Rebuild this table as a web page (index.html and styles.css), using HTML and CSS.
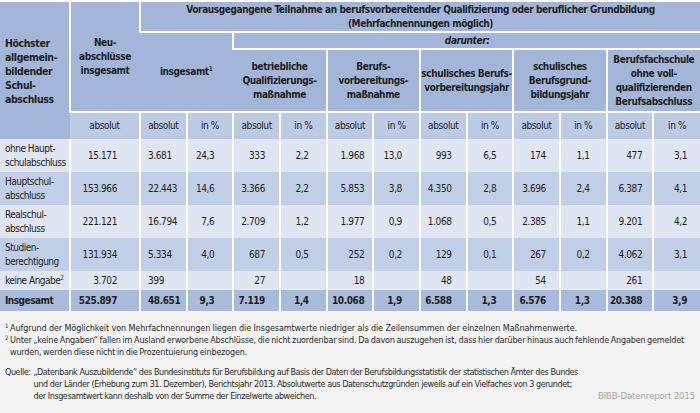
FILE: index.html
```html
<!DOCTYPE html>
<html lang="de">
<head>
<meta charset="utf-8">
<link rel="stylesheet" href="styles.css">
</head>
<body>
<table class="tbl">
  <colgroup>
    <col class="w1"><col class="w1">
    <col class="w2"><col class="w2"><col class="w2"><col class="w2"><col class="w2"><col class="w2">
    <col class="w2"><col class="w2"><col class="w2"><col class="w2"><col class="w2"><col class="w2">
  </colgroup>
  <thead>
    <tr class="h1">
      <th rowspan="4" class="rowhead">Höchster<br>allgemein-<br>bildender<br>Schul-<br>abschluss</th>
      <th rowspan="3">Neu-<br>abschlüsse<br>insgesamt</th>
      <th colspan="12">Vorausgegangene Teilnahme an berufsvorbereitender Qualifizierung oder beruflicher Grundbildung<br>(Mehrfachnennungen möglich)</th>
    </tr>
    <tr class="h2">
      <th rowspan="2" colspan="2">insgesamt<sup>1</sup></th>
      <th colspan="10" class="dar">darunter:</th>
    </tr>
    <tr class="h3">
      <th colspan="2">betriebliche<br>Qualifizierungs-<br>maßnahme</th>
      <th colspan="2">Berufs-<br>vorbereitungs-<br>maßnahme</th>
      <th colspan="2">schulisches Berufs-<br>vorbereitungsjahr</th>
      <th colspan="2">schulisches<br>Berufsgrund-<br>bildungsjahr</th>
      <th colspan="2">Berufsfachschule<br>ohne voll-<br>qualifizierenden<br>Berufsabschluss</th>
    </tr>
    <tr class="h4">
      <th>absolut</th>
      <th>absolut</th><th>in %</th>
      <th>absolut</th><th>in %</th>
      <th>absolut</th><th>in %</th>
      <th>absolut</th><th>in %</th>
      <th>absolut</th><th>in %</th>
      <th>absolut</th><th>in %</th>
    </tr>
  </thead>
  <tbody>
    <tr class="light tall">
      <td class="lab">ohne Haupt-<br>schulabschluss</td>
      <td class="c2">15.171</td><td class="c3">3.681</td><td class="c4">24,3</td>
      <td class="c5">333</td><td class="c6">2,2</td><td class="c7">1.968</td><td class="c8">13,0</td>
      <td class="c9">993</td><td class="c10">6,5</td><td class="c11">174</td><td class="c12">1,1</td>
      <td class="c13">477</td><td class="c14">3,1</td>
    </tr>
    <tr class="dark tall">
      <td class="lab">Hauptschul-<br>abschluss</td>
      <td class="c2">153.966</td><td class="c3">22.443</td><td class="c4">14,6</td>
      <td class="c5">3.366</td><td class="c6">2,2</td><td class="c7">5.853</td><td class="c8">3,8</td>
      <td class="c9">4.350</td><td class="c10">2,8</td><td class="c11">3.696</td><td class="c12">2,4</td>
      <td class="c13">6.387</td><td class="c14">4,1</td>
    </tr>
    <tr class="light tall">
      <td class="lab">Realschul-<br>abschluss</td>
      <td class="c2">221.121</td><td class="c3">16.794</td><td class="c4">7,6</td>
      <td class="c5">2.709</td><td class="c6">1,2</td><td class="c7">1.977</td><td class="c8">0,9</td>
      <td class="c9">1.068</td><td class="c10">0,5</td><td class="c11">2.385</td><td class="c12">1,1</td>
      <td class="c13">9.201</td><td class="c14">4,2</td>
    </tr>
    <tr class="dark tall">
      <td class="lab">Studien-<br>berechtigung</td>
      <td class="c2">131.934</td><td class="c3">5.334</td><td class="c4">4,0</td>
      <td class="c5">687</td><td class="c6">0,5</td><td class="c7">252</td><td class="c8">0,2</td>
      <td class="c9">129</td><td class="c10">0,1</td><td class="c11">267</td><td class="c12">0,2</td>
      <td class="c13">4.062</td><td class="c14">3,1</td>
    </tr>
    <tr class="light short">
      <td class="lab">keine Angabe<sup>2</sup></td>
      <td class="c2">3.702</td><td class="c3">399</td><td class="c4"></td>
      <td class="c5">27</td><td class="c6"></td><td class="c7">18</td><td class="c8"></td>
      <td class="c9">48</td><td class="c10"></td><td class="c11">54</td><td class="c12"></td>
      <td class="c13">261</td><td class="c14"></td>
    </tr>
    <tr class="total">
      <td class="lab">Insgesamt</td>
      <td class="c2">525.897</td><td class="c3">48.651</td><td class="c4">9,3</td>
      <td class="c5">7.119</td><td class="c6">1,4</td><td class="c7">10.068</td><td class="c8">1,9</td>
      <td class="c9">6.588</td><td class="c10">1,3</td><td class="c11">6.576</td><td class="c12">1,3</td>
      <td class="c13">20.388</td><td class="c14">3,9</td>
    </tr>
  </tbody>
</table>
<div class="notes">
  <p class="fn"><span class="mk"><sup>1</sup></span><span>Aufgrund der Möglichkeit von Mehrfachnennungen liegen die Insgesamtwerte niedriger als die Zeilensummen der einzelnen Maßnahmenwerte.</span></p>
  <p class="fn fn2"><span class="mk"><sup>2</sup></span><span>Unter „keine Angaben“ fallen im Ausland erworbene Abschlüsse, die nicht zuordenbar sind. Da davon auszugehen ist, dass hier darüber hinaus auch fehlende Angaben gemeldet<br>wurden, werden diese nicht in die Prozentuierung einbezogen.</span></p>
  <div class="source">
    <p class="src"><span class="lbl">Quelle:</span><span>„Datenbank Auszubildende“ des Bundesinstituts für Berufsbildung auf Basis der Daten der Berufsbildungsstatistik der statistischen Ämter des Bundes<br>und der Länder (Erhebung zum 31. Dezember), Berichtsjahr 2013. Absolutwerte aus Datenschutzgründen jeweils auf ein Vielfaches von 3 gerundet;<br>der Insgesamtwert kann deshalb von der Summe der Einzelwerte abweichen.</span></p>
    <span class="brand">BIBB-Datenreport 2015</span>
  </div>
</div>
</body>
</html>
```

FILE: styles.css
```css
html, body {
  margin: 0;
  padding: 0;
  background: #f3f3f3;
}
body {
  width: 700px;
  height: 413px;
  overflow: hidden;
  font-family: "DejaVu Sans Condensed", "DejaVu Sans", sans-serif;
  color: #1e1e1e;
}
.tbl {
  width: 700px;
  table-layout: fixed;
  border-collapse: collapse;
  border-top: 2px solid #fff;
  font-size: 10px;
  letter-spacing: -0.4px;
}
.w1 { width: 70px; }
.w2 { width: 46.666px; }
.tbl th, .tbl td {
  padding: 0;
  border-left: 2px solid #fff;
  white-space: nowrap;
}
.tbl th:first-child, .tbl td:first-child { border-left: 0; }
.tbl th {
  background: #a3b6d9;
  font-weight: bold;
  text-align: center;
  line-height: 14px;
  border-bottom: 2px solid #fff;
}
.tbl th.rowhead {
  text-align: left;
  padding-left: 5px;
  border-bottom: 0;
  font-size: 10.5px;
}
.h1 th { height: 29px; }
.h2 th { height: 15px; }
.h3 th { height: 61px; }
.h4 th {
  background: #bccae4;
  font-weight: normal;
  height: 26px;
  border-bottom: 0;
}
.h1 th.rowhead { height: auto; }
.dar { font-style: italic; }
sup {
  font-size: 6.5px;
  line-height: 0;
  vertical-align: 4px;
}
.tbl td {
  text-align: right;
  line-height: 14px;
}
.tall td { height: 33px; }
.short td { height: 19px; }
.total td { height: 21px; font-weight: bold; }
.light td { background: #dfe5f1; }
.dark td { background: #c1cee7; }
.total td { background: #a8bbdd; }
.tbl td.lab { text-align: left; padding-left: 5px; letter-spacing: -0.5px; }
.tbl .c2 { padding-right: 22px; }
.tbl .c3 { text-align: left; padding-left: 7px; }
.tbl .c4 { padding-right: 18px; }
.tbl .c5 { padding-right: 14px; }
.tbl .c6 { padding-right: 17px; }
.tbl .c7 { padding-right: 8px; }
.tbl .c8 { padding-right: 17px; }
.tbl .c9 { padding-right: 14px; }
.tbl .c10 { padding-right: 16px; }
.tbl .c11 { padding-right: 13px; }
.tbl .c12 { padding-right: 16px; }
.tbl .c13 { padding-right: 10px; }
.tbl .c14 { padding-right: 13px; }

.notes {
  padding: 11px 5px 0 5px;
  font-size: 9px;
  line-height: 12px;
  color: #2a2a2a;
  letter-spacing: -0.12px;
}
.fn {
  margin: 0;
  display: flex;
  white-space: nowrap;
}
.fn2 { letter-spacing: -0.2px; word-spacing: -0.6px; }
.fn .mk { flex: 0 0 5px; }
.fn sup { vertical-align: 3px; font-size: 6px; }
.source {
  position: relative;
  margin-top: 8px;
}
.src {
  margin: 0;
  display: flex;
  white-space: nowrap;
  letter-spacing: -0.45px;
}
.src .lbl { margin-right: 3px; }
.brand {
  position: absolute;
  right: 0;
  bottom: 0;
  color: #a3a3a3;
  font-size: 9.5px;
}
```
